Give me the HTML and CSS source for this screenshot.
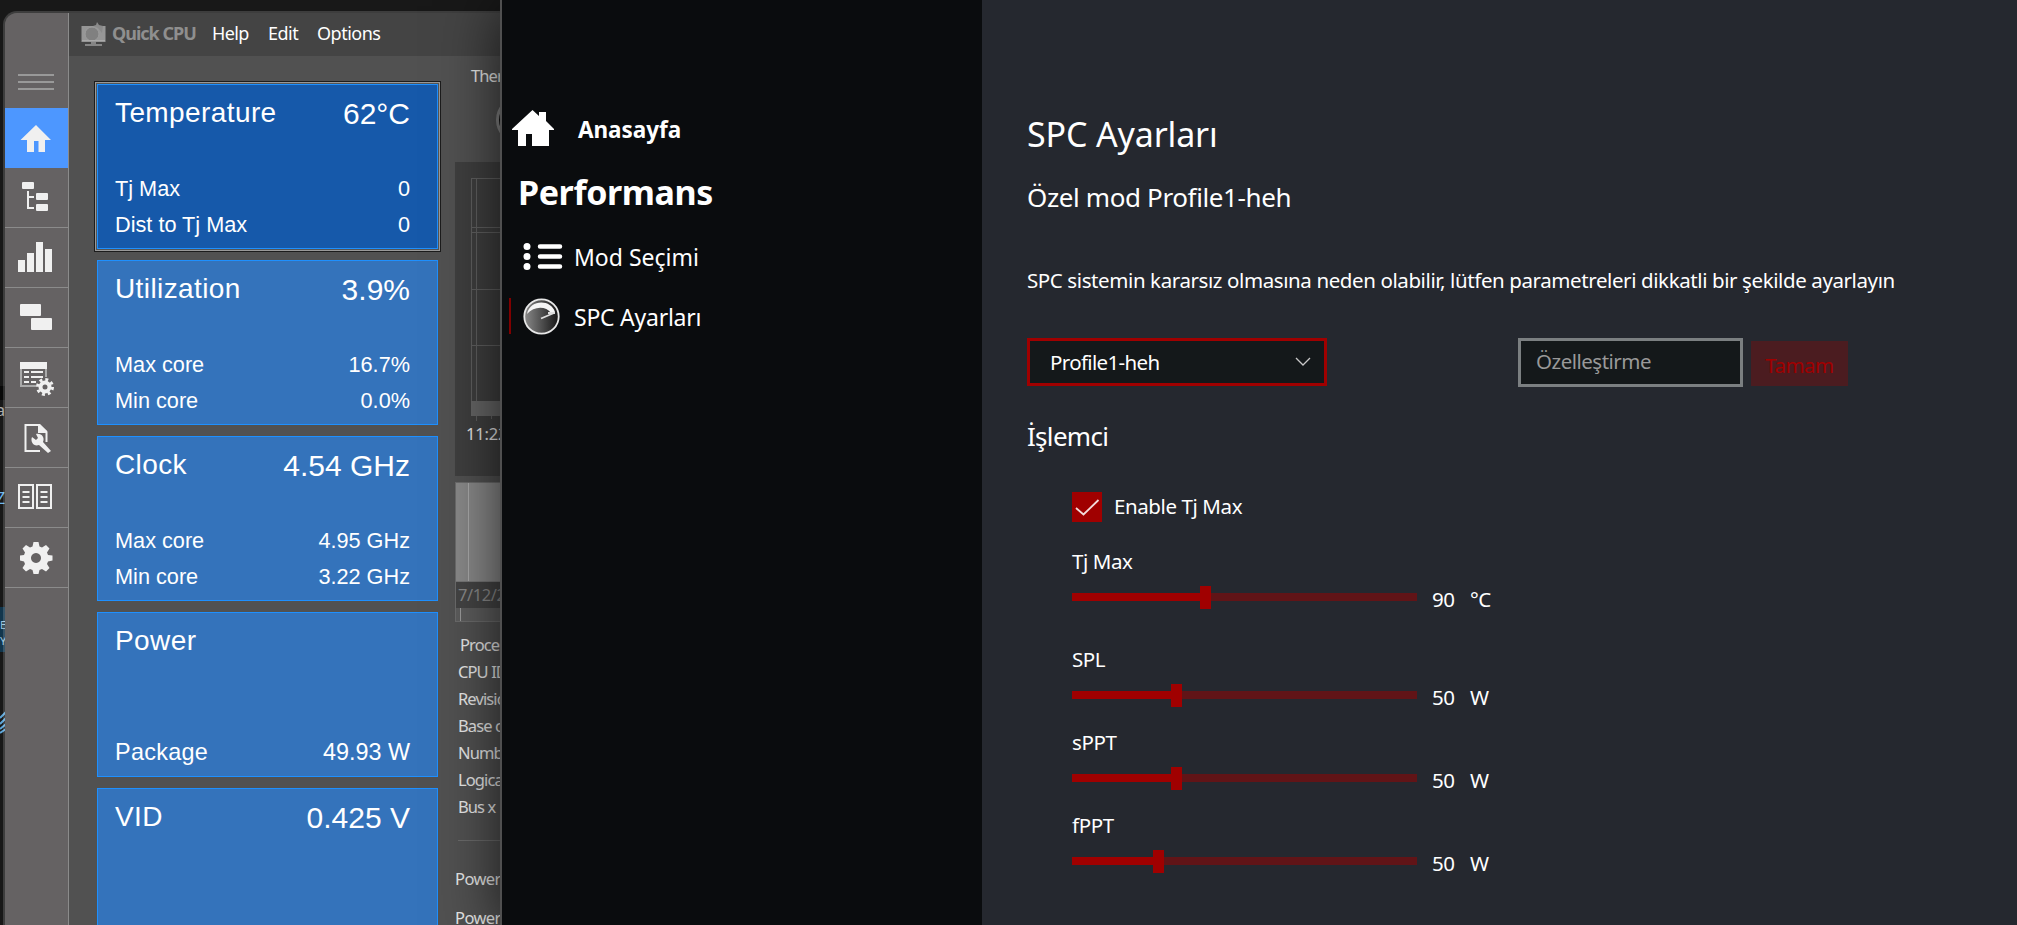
FILE: index.html
```
<!DOCTYPE html>
<html lang="tr">
<head>
  <meta charset="UTF-8"/>
  <meta name="viewport" content="width=device-width,initial-scale=1.0"/>
  <title>SPC Ayarları</title>
  <link rel="stylesheet" href="styles.css">
</head>
<body>

<div class="desk">
  <div class="desk-block"></div>
  <div class="desk-text">a</div>
  <div class="desk-text desk-blue">Z</div>
  <div class="desk-tile"><div>E</div><div>Y</div></div>
  <svg class="desk-wave" width="6" height="24" viewBox="0 0 6 24" fill="none" stroke="#5da5d8" stroke-width="2"><path d="M0 7L6 1M0 13L6 7M0 18L6 13M0 22L6 18"/></svg>
</div>

<div class="quick">
  <nav class="rail">
    <div class="burger"><i></i><i></i><i></i></div>
    <div class="rail-item active">
      <svg width="62" height="60" viewBox="0 0 62 60" fill="#f0f0f0"><path d="M31 17L46 32H40V44H33.5V33H29V44H22V32H15.500Z"/></svg>
    </div>
    <div class="rail-item">
      <svg width="62" height="60" viewBox="0 0 62 60" fill="#f0f0f0"><rect x="17" y="14" width="12" height="7" rx="1"/><rect x="31" y="25" width="12" height="7" rx="1"/><rect x="31" y="36" width="12" height="7" rx="1"/><path d="M22 23h2v5h5v2h-5v9h5v2h-7z"/></svg>
    </div>
    <div class="rail-item">
      <svg width="62" height="60" viewBox="0 0 62 60" fill="#f0f0f0"><path d="M13 32h7v12h-7zM22 25h7v19h-7zM31 14h7v30h-7zM40 21h7v23h-7z"/></svg>
    </div>
    <div class="rail-item">
      <svg width="62" height="60" viewBox="0 0 62 60" fill="#f0f0f0"><rect x="15" y="16" width="21" height="12" rx="1"/><rect x="26" y="30" width="21" height="12" rx="1"/></svg>
    </div>
    <div class="rail-item">
      <svg width="62" height="60" viewBox="0 0 62 60"><path d="M16 20V38H31M41 20V29" fill="none" stroke="#aaa" stroke-width="2"/><path d="M15 14h27v7H15zM19 23h5v2h-5zM26 23h12v2H26zM19 28h5v2h-5zM26 28h12v2H26zM19 33h5v2h-5zM26 33h5v2h-5z" fill="#f0f0f0"/><g fill="none" stroke="#f0f0f0"><circle cx="40" cy="39" r="4.500" stroke-width="4"/><circle cx="40" cy="39" r="7.500" stroke-width="3" stroke-dasharray="2.950"/></g></svg>
    </div>
    <div class="rail-item">
      <svg width="62" height="60" viewBox="0 0 62 60"><path d="M35 43H20.500V17H34L41.500 24V34" fill="none" stroke="#f0f0f0" stroke-width="2"/><path d="M33 16h2l7 7v2h-9z" fill="#f0f0f0"/><path d="M27 29l4 3 2-2-2-4c6-1 9 4 7 8l8 9-3 2-9-8c-5 2-9-3-7-8z" fill="#f0f0f0"/></svg>
    </div>
    <div class="rail-item">
      <svg width="62" height="60" viewBox="0 0 62 60" fill="none" stroke="#f0f0f0" stroke-width="2"><rect x="14" y="17" width="14" height="23"/><rect x="32" y="17" width="14" height="23"/><path d="M17.500 24h7M17.500 29h7M17.500 34h7M35.500 24h7M35.500 29h7M35.500 34h7"/></svg>
    </div>
    <div class="rail-item">
      <svg width="62" height="60" viewBox="0 1 62 60"><path fill="#f0f0f0" fill-rule="evenodd" d="M28.500 15h5l1 4.500 2.500 1 4-2.500 3.500 3.500-2.500 4 1 2.500 4.500.5v5l-4.500 1-1 2.500 2.500 4-3.500 3.500-4-2.500-2.500 1-1 4h-5l-1-4-2.500-1-4 2.500-3.500-3.500 2.500-4-1-2.500-4-1v-5l4-.5 1-2.500-2.500-4 3.500-3.500 4 2.500 2.500-1zM31 26a5 5 0 1 0 .01 0z"/></svg>
    </div>
  </nav>

  <div class="quick-body">
    <header class="menubar">
      <svg width="25" height="24" viewBox="0 0 25 24"><rect x="0.500" y="4" width="24" height="16" fill="#969696"/><circle cx="11" cy="12" r="7" fill="#808080" stroke="#9d9d9d"/><path d="M12 4l3-1 1-3 2 3 4 1-1 7-4-5z" fill="#8a8a8a"/><path d="M1 18h23v1H1z" fill="#aaa"/><path d="M10 20h5v2h6v2H4v-2h6z" fill="#858585"/></svg>
      <strong class="brand">Quick CPU</strong>
      <span class="help">Help</span>
      <span class="edit">Edit</span>
      <span class="options">Options</span>
    </header>
    <div class="quick-content">
      <div class="cards">
        <section class="card selected">
          <div class="card-head"><span>Temperature</span><b>62°C</b></div>
          <div class="card-row"><span>Tj Max</span><span>0</span></div>
          <div class="card-row"><span>Dist to Tj Max</span><span>0</span></div>
        </section>
        <section class="card">
          <div class="card-head"><span>Utilization</span><b>3.9%</b></div>
          <div class="card-row"><span>Max core</span><span>16.7%</span></div>
          <div class="card-row"><span>Min core</span><span>0.0%</span></div>
        </section>
        <section class="card">
          <div class="card-head"><span>Clock</span><b>4.54 GHz</b></div>
          <div class="card-row"><span>Max core</span><span>4.95 GHz</span></div>
          <div class="card-row"><span>Min core</span><span>3.22 GHz</span></div>
        </section>
        <section class="card single">
          <div class="card-head"><span>Power</span></div>
          <div class="card-row"><span>Package</span><span>49.93 W</span></div>
        </section>
        <section class="card">
          <div class="card-head"><span>VID</span><b>0.425 V</b></div>
        </section>
      </div>

      <div class="details">
        <div class="thermal">Ther</div>
        <div class="dial"></div>
        <div class="graph">
          <svg width="60" height="260" viewBox="0 0 60 260"><path d="M16 16.500H60M16 65.500H60M16 70.500H60M16 127.500H60M16 183.500H60M16.500 16V239M21.500 16V239M21.500 254v5M36.500 254v3" stroke="#606060" fill="none"/><path d="M16 239h44v15H16z" fill="#666"/></svg>
          <span>11:22</span>
        </div>
        <div class="timeline">
          <div class="timeline-bar"></div>
          <div class="timeline-date">7/12/2</div>
          <div class="timeline-scroll"></div>
        </div>
        <ul class="specs">
          <li class="first">Proces</li>
          <li>CPU ID</li>
          <li>Revisio</li>
          <li>Base c</li>
          <li>Numb</li>
          <li>Logica</li>
          <li>Bus x</li>
        </ul>
        <div class="powers"><div>Power</div><div>Power</div></div>
      </div>
    </div>
  </div>
</div>

<div class="control">
  <nav class="side">
    <div class="side-home">
      <svg width="42" height="37" viewBox="0 0 42 37" fill="#fff"><path d="M20.500 0L27 6V2h7v9l8 8v1h-5v16H20V24h-6v12H6V20H0v-1z"/></svg>
      <span>Anasayfa</span>
    </div>
    <h2>Performans</h2>
    <div class="side-link">
      <svg class="list-icon" width="40" height="27" viewBox="0 0 40 27" stroke="#fff" stroke-linecap="round"><path d="M4 3.500h.01M4 13.500h.01M4 23.500h.01" stroke-width="7"/><path d="M17 3.500h20M17 13.500h20M17 23.500h20" stroke-width="4.500"/></svg>
      <span class="mode">Mod Seçimi</span>
    </div>
    <div class="side-link current">
      <svg class="gauge-icon" width="37" height="37" viewBox="0 0 37 37">
        <defs><linearGradient id="dial"><stop offset="0" stop-color="#8a8a8a"/><stop offset="1" stop-color="#151515"/></linearGradient></defs>
        <circle cx="18.500" cy="18.500" r="17.200" fill="url(#dial)" stroke="#e8e8e8" stroke-width="1.800"/>
        <path d="M4 16C7 1 28 1 32 14l-4 1C23 8 11 8 4 16z" fill="#f5f5f5"/>
        <path d="M18 20.500L31 15M25 15h7" stroke="#ddd" stroke-width="1.800"/>
      </svg>
      <span class="spc">SPC Ayarları</span>
    </div>
  </nav>

  <main class="settings">
    <h1><span>SPC Ayarları</span></h1>
    <h3 class="profile">Özel mod Profile1-heh</h3>
    <p class="warning">SPC sistemin kararsız olmasına neden olabilir, lütfen parametreleri dikkatli bir şekilde ayarlayın</p>
    <div class="toolbar">
      <div class="select">
        <span>Profile1-heh</span>
        <svg width="16" height="10" viewBox="0 0 16 10" fill="none" stroke="#c8c8c8" stroke-width="1.300"><path d="M1 1l7 7 7-7"/></svg>
      </div>
      <div class="name-input">Özelleştirme</div>
      <div class="ok-button">Tamam</div>
    </div>
    <h3 class="group-title">İşlemci</h3>
    <div class="group">
      <div class="check-row">
        <div class="checkbox"><svg width="30" height="30" viewBox="0 0 30 30" fill="none" stroke="#f3dcdc" stroke-width="1.800"><path d="M4 16l7.500 6.500L26.500 8"/></svg></div>
        <span>Enable Tj Max</span>
      </div>
      <div class="slider-row tj">
        <label>Tj Max</label>
        <div class="slider-line">
          <div class="track"><div class="fill" style="width: 128px"></div><div class="thumb"></div></div>
          <span class="value">90</span><span>°C</span>
        </div>
      </div>
      <div class="slider-row">
        <label>SPL</label>
        <div class="slider-line">
          <div class="track"><div class="fill" style="width: 99px"></div><div class="thumb"></div></div>
          <span class="value">50</span><span>W</span>
        </div>
      </div>
      <div class="slider-row">
        <label>sPPT</label>
        <div class="slider-line">
          <div class="track"><div class="fill" style="width: 99px"></div><div class="thumb"></div></div>
          <span class="value">50</span><span>W</span>
        </div>
      </div>
      <div class="slider-row">
        <label>fPPT</label>
        <div class="slider-line">
          <div class="track"><div class="fill" style="width: 81px"></div><div class="thumb"></div></div>
          <span class="value">50</span><span>W</span>
        </div>
      </div>
    </div>
  </main>
</div>

</body>
</html>
```
FILE: styles.css
```
* {
  margin: 0;
  padding: 0;
  box-sizing: border-box;
}

body {
  width: 2017px;
  height: 925px;
  position: relative;
  overflow: hidden;
  background: #181818;
  color: #fff;
  font-family: "Noto Sans", sans-serif;
  white-space: nowrap;
}

svg {
  display: block;
  flex: none;
}

h1, h2, h3 {
  font-weight: normal;
}

/* desktop behind the windows */
.desk {
  width: 5px;
  height: 925px;
  overflow: hidden;
  font-size: 16px;
  line-height: 20px;
}

.desk-block {
  height: 14px;
  margin-top: 386px;
  background: #080808;
}

.desk-text {
  height: 88px;
  margin-left: -4px;
  color: #aaa;
}

.desk-blue {
  height: 119px;
  color: #6cb6ee;
}

.desk-tile {
  height: 45px;
  padding-top: 10px;
  background: #12364d;
  color: #9cc3dd;
  font-size: 11px;
  line-height: 16px;
}

.desk-wave {
  margin-top: 59px;
}

/* Quick CPU window */
.quick {
  position: absolute;
  left: 3px;
  top: 11px;
  width: 600px;
  height: 930px;
  display: flex;
  border: 2px solid rgba(255, 255, 255, 0.16);
  border-radius: 14px 0 0 0;
  background: #515151;
  background-clip: padding-box;
  overflow: hidden;
}

.rail {
  width: 64px;
  flex: none;
  background: #656263;
  border-right: 1px solid #8b8b8b;
}

.burger {
  height: 95px;
  padding: 61px 0 0 13px;
}

.burger i {
  display: block;
  width: 36px;
  height: 2px;
  margin-bottom: 5px;
  background: #999;
}

.rail-item {
  height: 60px;
  border-bottom: 1px solid #8b8b8b;
}

.rail-item.active {
  background: #4d97ff;
  border-bottom-color: #4d97ff;
}

.quick-body {
  flex: 1;
}

.menubar {
  height: 43px;
  display: flex;
  align-items: flex-start;
  padding: 9px 0 0 12px;
  background: #444;
  font-size: 18px;
  line-height: 23px;
}

.menubar .brand {
  width: 100px;
  margin-left: 6px;
  color: #8f8f8f;
  letter-spacing: -1px;
}

.menubar .help {
  width: 56px;
  letter-spacing: -0.6px;
}

.menubar .edit {
  width: 49px;
  letter-spacing: -0.5px;
}

.menubar .options {
  letter-spacing: -0.5px;
}

.quick-content {
  display: flex;
  padding-left: 28px;
}

.cards {
  width: 341px;
  display: flex;
  flex-direction: column;
  gap: 11px;
  padding-top: 28px;
  font-family: "Liberation Sans", Arial, sans-serif;
}

.card {
  height: 165px;
  padding: 12px 27px 0 17px;
  background: #3473bb;
  border: 1px solid #1e90ff;
  font-size: 21.7px;
  line-height: 36px;
}

.card.selected {
  background: #1659aa;
  box-shadow: 0 0 0 1px #555, 0 0 0 2px #999, 0 0 0 3px #1c1c1c;
}

.card-head {
  height: 74px;
  display: flex;
  justify-content: space-between;
  font-size: 28px;
  line-height: 32px;
  letter-spacing: 0.4px;
}

.card-head b {
  font-size: 30px;
  font-weight: normal;
  line-height: 34px;
  letter-spacing: 0;
}

.card-row {
  display: flex;
  justify-content: space-between;
}

.single .card-row {
  padding-top: 35px;
  font-size: 23.4px;
}

.single .card-row span:first-child {
  letter-spacing: 0.3px;
}

.details {
  width: 120px;
  margin-left: 17px;
  color: #e8e8e8;
  font-size: 16.5px;
  letter-spacing: -0.9px;
}

.thermal {
  height: 40px;
  padding: 8px 0 0 16px;
  line-height: 24px;
}

.dial {
  width: 48px;
  height: 48px;
  margin-left: 41px;
  border: 3px solid #858585;
  border-radius: 50%;
  background: #111;
}

.graph {
  height: 314px;
  margin-top: 18px;
  background: #3f3f3f;
}

.graph span {
  display: block;
  padding-left: 11px;
  line-height: 24px;
  letter-spacing: -0.2px;
}

.timeline {
  height: 140px;
  margin-top: 6px;
  border: 1px solid #6b6b6b;
  background: #444;
}

.timeline-bar {
  height: 99px;
  border-bottom: 1px solid #777;
  background: linear-gradient(to right, #898989 12px, #aaa 12px, #aaa 13px, #898989 13px);
}

.timeline-date {
  height: 26px;
  padding-left: 2px;
  color: #888;
  line-height: 26px;
  letter-spacing: -0.4px;
}

.timeline-scroll {
  height: 13px;
  border-left: 4px solid #5c5c5c;
  background: linear-gradient(to right, #999 1px, #5c5c5c 1px);
}

.specs {
  height: 219px;
  padding-top: 9px;
  margin-left: 3px;
  border-bottom: 1px solid #6a6a6a;
  list-style: none;
  line-height: 27px;
}

.specs .first {
  padding-left: 2px;
}

.powers {
  padding-top: 18px;
  line-height: 39px;
  letter-spacing: -0.6px;
}

/* Control center window */
.control {
  position: absolute;
  left: 500px;
  top: 0;
  width: 1517px;
  height: 925px;
  display: flex;
  border-left: 2px solid #505050;
  box-shadow: 0 6px 56px rgba(0, 0, 0, 0.7);
}

.side {
  width: 480px;
  padding-top: 110px;
  background: #0a0c0e;
}

.side-home {
  height: 58px;
  display: flex;
  padding-left: 10px;
  font-size: 22.5px;
  font-weight: bold;
  line-height: 40px;
}

.side-home span {
  margin-left: 24px;
  letter-spacing: -0.05px;
}

.side h2 {
  height: 58px;
  padding: 0 0 0 16px;
  font-size: 34px;
  font-weight: bold;
  line-height: 48px;
  letter-spacing: -0.4px;
}

.side-link {
  height: 60px;
  display: flex;
  align-items: center;
  font-size: 23px;
  line-height: 36px;
}

.list-icon {
  margin-left: 21px;
}

.side-link .mode {
  margin-left: 11px;
  padding-top: 2px;
  letter-spacing: 0;
}

.side-link .spc {
  margin-left: 14px;
  padding-top: 2px;
  letter-spacing: -0.25px;
}

.side-link.current {
  height: 36px;
  margin: 12px 0 0 7px;
  border-left: 2px solid #800000;
}

.gauge-icon {
  margin-left: 12px;
}

.settings {
  flex: 1;
  padding: 110px 0 0 45px;
  background: #25282f;
}

.settings h1 {
  height: 68px;
  font-size: 34px;
  line-height: 48px;
  letter-spacing: -0.15px;
}

.profile {
  height: 84px;
  font-size: 26px;
  line-height: 38px;
  letter-spacing: -0.38px;
}

.warning {
  height: 76px;
  font-size: 20.5px;
  line-height: 36px;
  letter-spacing: -0.4px;
}

.toolbar {
  height: 82px;
  display: flex;
  align-items: flex-start;
  font-size: 20.5px;
  letter-spacing: -0.5px;
}

.select {
  width: 300px;
  height: 48px;
  display: flex;
  align-items: center;
  justify-content: space-between;
  padding: 0 13px 0 20px;
  border: 3px solid #a00000;
  background: #14181a;
  letter-spacing: -0.65px;
}

.name-input {
  width: 225px;
  height: 49px;
  margin-left: 191px;
  padding-left: 15px;
  border: 3px solid #7b7f81;
  background: #14181a;
  color: #999;
  line-height: 40px;
}

.ok-button {
  width: 97px;
  height: 45px;
  margin: 3px 0 0 8px;
  background: #4b1c20;
  color: #a00000;
  line-height: 48px;
  text-align: center;
}

.group-title {
  height: 72px;
  font-size: 26px;
  line-height: 32px;
  letter-spacing: -0.7px;
}

.group {
  padding-left: 45px;
  font-size: 20.5px;
  letter-spacing: -0.4px;
}

.check-row {
  height: 56px;
  display: flex;
  gap: 12px;
  line-height: 28px;
}

.checkbox {
  width: 30px;
  height: 30px;
  background: #a00000;
}

.slider-row {
  height: 83px;
}

.slider-row.tj {
  height: 98px;
}

.slider-row label {
  display: block;
  height: 37px;
  line-height: 26px;
}

.slider-line {
  height: 24px;
  display: flex;
  align-items: flex-start;
  line-height: 28px;
}

.track {
  width: 345px;
  height: 24px;
  display: flex;
  align-items: center;
  background: linear-gradient(#611417, #611417) 0 8px / 100% 8px no-repeat;
}

.fill {
  height: 8px;
  background: #a00000;
}

.thumb {
  width: 11px;
  height: 23px;
  background: #a00000;
}

.value {
  width: 38px;
  margin-left: 15px;
}
```
